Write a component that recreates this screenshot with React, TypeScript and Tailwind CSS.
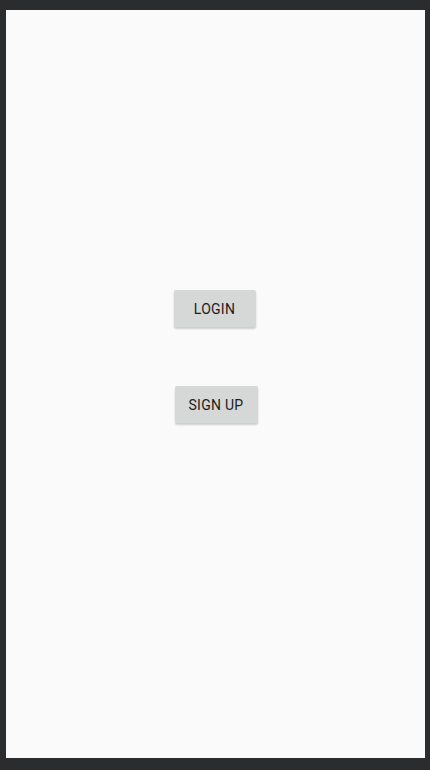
export default function App() {
  return (
    <div className="h-[770px] w-[430px] bg-[#2b2c2d] pl-[6px] pr-[5px] pt-[10px] pb-[12px]">
      <div className="flex h-full w-full flex-col items-center bg-[#fafafa] pt-[280px] font-['Roboto',sans-serif]">
        <button className="ml-[-2px] h-[37px] w-[82px] rounded-[2px] bg-[#d6d7d7] pt-[2px] text-[14px] font-normal tracking-[0.02em] text-[#1c1c1c] shadow-[0_2px_2px_rgba(0,0,0,0.18)]">
          LOGIN
        </button>
        <button className="mt-[59px] ml-[1px] h-[37px] w-[83px] rounded-[2px] bg-[#d6d7d7] pt-[2px] text-[14px] font-normal tracking-[0.02em] text-[#1c1c1c] shadow-[0_2px_2px_rgba(0,0,0,0.18)]">
          SIGN UP
        </button>
      </div>
    </div>
  );
}
